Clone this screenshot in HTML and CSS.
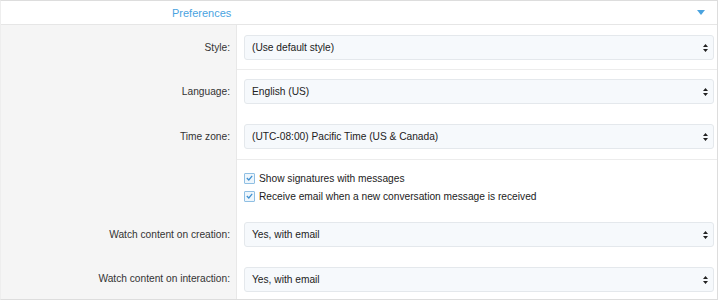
FILE: index.html
```html
<!DOCTYPE html>
<html>

<head>
    <title>Preferences</title>
    <link rel="stylesheet" href="styles.css">
</head>

<body>
    <div class="block">
        <div class="block-header">
            <span class="block-title">Preferences</span>
            <svg class="toggle" width="8" height="5" viewBox="0 0 8 5"><path d="M0 0h8L4 5z" fill="#4aa3df"/></svg>
        </div>

        <div class="row first">
            <div class="label">Style:</div>
            <div class="control">
                <div class="select">(Use default style)<svg class="caret" width="5" height="8" viewBox="0 0 5 8"><path d="M2.5 0L5 3H0zM2.5 8L0 5h5z" fill="#222"/></svg></div>
            </div>
        </div>

        <div class="row sep">
            <div class="label">Language:</div>
            <div class="control">
                <div class="select">English (US)<svg class="caret" width="5" height="8" viewBox="0 0 5 8"><path d="M2.5 0L5 3H0zM2.5 8L0 5h5z" fill="#222"/></svg></div>
            </div>
        </div>

        <div class="row">
            <div class="label">Time zone:</div>
            <div class="control">
                <div class="select">(UTC-08:00) Pacific Time (US &amp; Canada)<svg class="caret" width="5" height="8" viewBox="0 0 5 8"><path d="M2.5 0L5 3H0zM2.5 8L0 5h5z" fill="#222"/></svg></div>
            </div>
        </div>

        <div class="row sep checks">
            <div class="label"></div>
            <div class="control">
                <div class="check"><span class="box"><svg width="7" height="6" viewBox="0 0 7 6"><path d="M0.8 3l2 2L6.2 0.8" fill="none" stroke="#3d8fd0" stroke-width="1.2"/></svg></span>Show signatures with messages</div>
                <div class="check"><span class="box"><svg width="7" height="6" viewBox="0 0 7 6"><path d="M0.8 3l2 2L6.2 0.8" fill="none" stroke="#3d8fd0" stroke-width="1.2"/></svg></span>Receive email when a new conversation message is received</div>
            </div>
        </div>

        <div class="row">
            <div class="label">Watch content on creation:</div>
            <div class="control">
                <div class="select">Yes, with email<svg class="caret" width="5" height="8" viewBox="0 0 5 8"><path d="M2.5 0L5 3H0zM2.5 8L0 5h5z" fill="#222"/></svg></div>
            </div>
        </div>

        <div class="row last">
            <div class="label">Watch content on interaction:</div>
            <div class="control">
                <div class="select">Yes, with email<svg class="caret" width="5" height="8" viewBox="0 0 5 8"><path d="M2.5 0L5 3H0zM2.5 8L0 5h5z" fill="#222"/></svg></div>
            </div>
        </div>
    </div>
</body>

</html>
```

FILE: styles.css
```css
body {
    margin: 0;
    background-color: #FFFFFF;
    color: #333333;
    font-family: "Liberation Sans", Arial, sans-serif;
    font-size: 10.2px;
}

.block {
    width: 716px;
    border: 1px solid #dddddd;
    border-left-color: #eeeeee;
}

.block-header {
    height: 23px;
    display: flex;
    align-items: center;
    justify-content: space-between;
    padding: 0 12px 0 171px;
    border-bottom: 1px solid #e6e6e6;
}

.block-title {
    color: #4aa3df;
    font-size: 11px;
}

.row {
    display: grid;
    grid-template-columns: 236px 1fr;
}

.label {
    background-color: #f5f5f5;
    border-right: 1px solid #e8e8e8;
    display: flex;
    align-items: center;
    justify-content: flex-end;
    padding-right: 6px;
}

.control {
    padding: 10px 3px 10px 7px;
}

.row.first .control {
    padding-top: 10px;
    padding-bottom: 9px;
}

.row.sep .control {
    border-top: 1px solid #ececec;
    padding-top: 9px;
}

.row.last .control {
    padding-bottom: 7px;
}

.select {
    height: 23px;
    border: 1px solid #e4e8ec;
    border-radius: 3px;
    background-color: #f6f9fc;
    color: #222222;
    display: flex;
    align-items: center;
    justify-content: space-between;
    padding: 0 5px 0 7px;
}

.row.checks .control {
    padding-top: 9px;
    padding-bottom: 7px;
}

.check {
    height: 18px;
    display: flex;
    align-items: center;
    color: #222222;
}

.box {
    width: 9px;
    height: 9px;
    border: 1px solid #8fbfe3;
    border-radius: 1px;
    background-color: #eef6fc;
    display: flex;
    align-items: center;
    justify-content: center;
    margin: 0 4px 0 0;
}
```
